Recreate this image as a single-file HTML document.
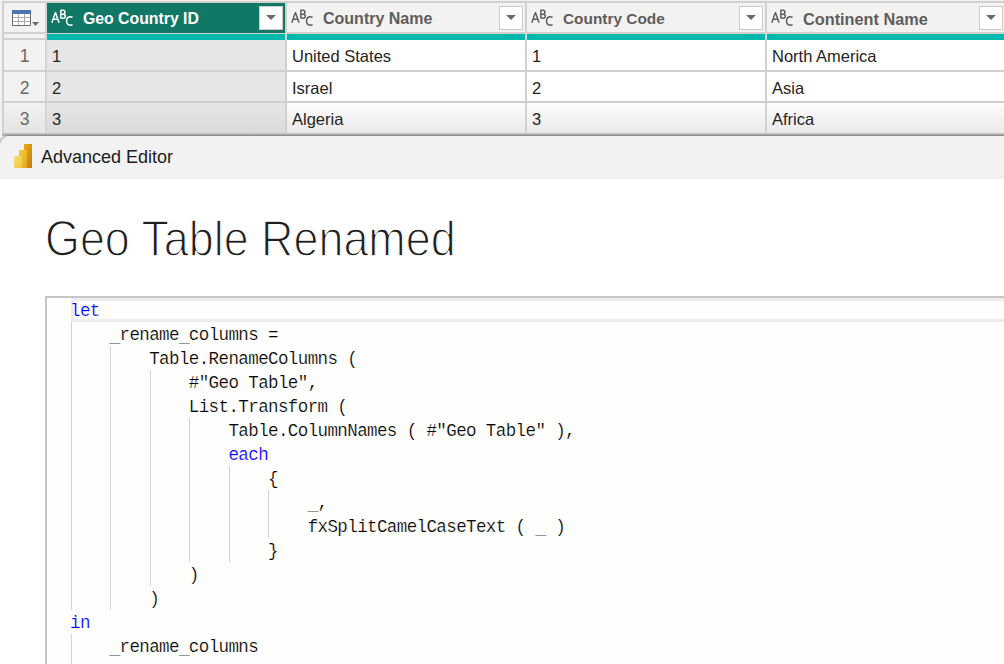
<!DOCTYPE html>
<html><head><meta charset="utf-8">
<style>
*{margin:0;padding:0;box-sizing:border-box}
html,body{width:1004px;height:664px;overflow:hidden;background:#fff;font-family:"Liberation Sans",sans-serif}
.a{position:absolute}
#grid{position:absolute;left:0;top:0;width:1004px;height:150px;background:#f3f2f1}
.hl{position:absolute;background:#d2d0ce}
.hdr{position:absolute;top:3px;height:29px;background:#f3f2f1}
.hdr.sel{background:#127866}
.htxt{position:absolute;top:7px;font-weight:bold;font-size:16px;color:#605e5c;white-space:nowrap}
.sel .htxt{color:#fff}
.dd{position:absolute;top:3px;width:24px;height:24px;background:#fff;border:1px solid #cfc9c7}
.dd:after{content:"";position:absolute;left:6px;top:8px;border-left:5px solid transparent;border-right:5px solid transparent;border-top:5px solid #6b6b6b}
.abc{position:absolute;top:0;width:30px;height:29px;overflow:visible}
.cell{position:absolute;height:30px;background:#fff}
.ctxt{position:absolute;top:7px;font-size:16.5px;color:#252423;white-space:nowrap}
.rn{position:absolute;left:4px;width:41px;height:30px;background:#f3f2f1;text-align:center}
.rn span{position:absolute;left:0;right:0;top:6px;font-size:17.5px;color:#6a6866}
#panel{position:absolute;left:0;top:136px;width:1010px;height:540px;background:#fff;border-top-left-radius:10px;box-shadow:-1px -1px 2px rgba(0,0,0,0.3)}
#tbar{position:absolute;left:0;top:0;width:1010px;height:43px;background:#f2f2f2;border-top-left-radius:10px}
#title{position:absolute;left:45px;top:210px;font-size:50px;color:#1f1f1f;white-space:nowrap;transform-origin:0 0;transform:scaleX(0.897);-webkit-text-stroke:1.4px #fff}
#ed{position:absolute;left:45px;top:296px;width:970px;height:380px;background:#fefefc;border:2px solid #c6c6c6;border-right:none;border-bottom:none}
.ln{position:absolute;left:70px;height:24px;font-family:"Liberation Mono",monospace;font-size:17.5px;letter-spacing:-0.6px;-webkit-text-stroke:0.2px #fefefc;line-height:24px;color:#000;white-space:pre}
.kw{color:#0000ff}
.u{position:relative;top:1.5px}
.g{position:absolute;width:1px;background:#d4d4d4}
</style></head><body>
<div id="grid">
  <!-- outer lines -->
  <div class="hl" style="left:2px;top:1px;width:1002px;height:2px"></div>
  <div class="hl" style="left:2px;top:1px;width:2px;height:135px"></div>
  <!-- header row bottom -->
  <div class="hl" style="left:2px;top:32px;width:1002px;height:2px"></div>
  <!-- column dividers -->
  <div class="hl" style="left:45px;top:1px;width:2px;height:135px;background:#d8d2d0"></div>
  <div class="hl" style="left:285px;top:1px;width:2px;height:135px"></div>
  <div class="hl" style="left:525px;top:1px;width:2px;height:135px"></div>
  <div class="hl" style="left:765px;top:1px;width:2px;height:135px"></div>

  
  <!-- header cells -->
  <div class="hdr" style="left:4px;width:41px"></div>
  <svg class="a" style="left:0;top:0" width="44" height="32" viewBox="0 0 44 32">
    <rect x="12" y="10" width="19" height="16" fill="#fff"/>
    <rect x="12" y="10" width="19" height="4" fill="#4878b4"/>
    <path d="M18.5 14V25M24.5 14V25M13 17.5H30M13 21.5H30" stroke="#ababab" stroke-width="1" fill="none"/>
    <path d="M12.5 14V25.5H30.5V14" stroke="#6b6b6b" stroke-width="1" fill="none"/>
    <path d="M32 22H39L35.5 26Z" fill="#6b6b6b"/>
  </svg>
  <div class="hdr sel" style="left:47px;width:238px;top:3px;height:30px">
    <svg class="abc" style="left:4px" viewBox="0 0 30 29"><g fill="none" stroke="#fff" stroke-width="1.5" stroke-linejoin="round"><path d="M0.8 19.8L4.45 9.6L8.1 19.8M2.3 16.3H6.6"/><path d="M9.85 15.15V7.25H12C13.3 7.25 13.9 7.9 13.9 9.2C13.9 10.5 13.2 11.3 12 11.3H9.85M12 11.3C13.5 11.3 14.3 12 14.3 13.2C14.3 14.5 13.5 15.15 12 15.15H9.85"/><path d="M21.6 14.3C21 13.95 20.3 13.85 19.4 13.85C17 13.85 15.55 15.6 15.55 18.1C15.55 20.6 17 22.15 19.3 22.15C20.2 22.15 21 21.95 21.6 21.6"/></g></svg>
    <div class="htxt" style="left:36px;font-size:15.8px">Geo Country ID</div>
    <div class="dd" style="left:212px"></div>
  </div>
  <div class="hdr" style="left:287px;width:238px">
    <svg class="abc" style="left:4px" viewBox="0 0 30 29"><g fill="none" stroke="#605e5c" stroke-width="1.5" stroke-linejoin="round"><path d="M0.8 19.8L4.45 9.6L8.1 19.8M2.3 16.3H6.6"/><path d="M9.85 15.15V7.25H12C13.3 7.25 13.9 7.9 13.9 9.2C13.9 10.5 13.2 11.3 12 11.3H9.85M12 11.3C13.5 11.3 14.3 12 14.3 13.2C14.3 14.5 13.5 15.15 12 15.15H9.85"/><path d="M21.6 14.3C21 13.95 20.3 13.85 19.4 13.85C17 13.85 15.55 15.6 15.55 18.1C15.55 20.6 17 22.15 19.3 22.15C20.2 22.15 21 21.95 21.6 21.6"/></g></svg>
    <div class="htxt" style="left:36px">Country Name</div>
    <div class="dd" style="left:212px"></div>
  </div>
  <div class="hdr" style="left:527px;width:238px">
    <svg class="abc" style="left:4px" viewBox="0 0 30 29"><g fill="none" stroke="#605e5c" stroke-width="1.5" stroke-linejoin="round"><path d="M0.8 19.8L4.45 9.6L8.1 19.8M2.3 16.3H6.6"/><path d="M9.85 15.15V7.25H12C13.3 7.25 13.9 7.9 13.9 9.2C13.9 10.5 13.2 11.3 12 11.3H9.85M12 11.3C13.5 11.3 14.3 12 14.3 13.2C14.3 14.5 13.5 15.15 12 15.15H9.85"/><path d="M21.6 14.3C21 13.95 20.3 13.85 19.4 13.85C17 13.85 15.55 15.6 15.55 18.1C15.55 20.6 17 22.15 19.3 22.15C20.2 22.15 21 21.95 21.6 21.6"/></g></svg>
    <div class="htxt" style="left:36px;font-size:15.4px">Country Code</div>
    <div class="dd" style="left:212px"></div>
  </div>
  <div class="hdr" style="left:767px;width:237px">
    <svg class="abc" style="left:4px" viewBox="0 0 30 29"><g fill="none" stroke="#605e5c" stroke-width="1.5" stroke-linejoin="round"><path d="M0.8 19.8L4.45 9.6L8.1 19.8M2.3 16.3H6.6"/><path d="M9.85 15.15V7.25H12C13.3 7.25 13.9 7.9 13.9 9.2C13.9 10.5 13.2 11.3 12 11.3H9.85M12 11.3C13.5 11.3 14.3 12 14.3 13.2C14.3 14.5 13.5 15.15 12 15.15H9.85"/><path d="M21.6 14.3C21 13.95 20.3 13.85 19.4 13.85C17 13.85 15.55 15.6 15.55 18.1C15.55 20.6 17 22.15 19.3 22.15C20.2 22.15 21 21.95 21.6 21.6"/></g></svg>
    <div class="htxt" style="left:36px;font-size:16.3px">Continent Name</div>
    <div class="dd" style="left:212px"></div>
  </div>

  <!-- teal quality bar -->
  <div class="a" style="left:47px;top:34px;width:238px;height:6px;background:#01b8aa"></div>
  <div class="a" style="left:287px;top:34px;width:238px;height:6px;background:#01b8aa"></div>
  <div class="a" style="left:527px;top:34px;width:238px;height:6px;background:#01b8aa"></div>
  <div class="a" style="left:767px;top:34px;width:237px;height:6px;background:#01b8aa"></div>
  <div class="hl" style="left:4px;top:38px;width:41px;height:2px"></div>

  <!-- rows -->
  <div class="rn" style="top:40px"><span>1</span></div>
  <div class="rn" style="top:72px"><span>2</span></div>
  <div class="rn" style="top:103px;background:linear-gradient(#f3f2f1,#e4e4e4)"><span>3</span></div>
  <div class="hl" style="left:2px;top:70px;width:1002px;height:2px"></div>
  <div class="hl" style="left:2px;top:101px;width:1002px;height:2px"></div>
  <div class="hl" style="left:2px;top:133px;width:1002px;height:3px;background:linear-gradient(#c8c8c8,#b0b0b0)"></div>

  <div class="cell" style="left:47px;top:40px;width:238px;background:#e6e6e6"><div class="ctxt" style="left:5px">1</div></div>
  <div class="cell" style="left:287px;top:40px;width:238px"><div class="ctxt" style="left:5px">United States</div></div>
  <div class="cell" style="left:527px;top:40px;width:238px"><div class="ctxt" style="left:5px">1</div></div>
  <div class="cell" style="left:767px;top:40px;width:237px"><div class="ctxt" style="left:5px">North America</div></div>

  <div class="cell" style="left:47px;top:72px;width:238px;height:29px;background:#e6e6e6"><div class="ctxt" style="left:5px;top:7px">2</div></div>
  <div class="cell" style="left:287px;top:72px;width:238px;height:29px"><div class="ctxt" style="left:5px;top:7px">Israel</div></div>
  <div class="cell" style="left:527px;top:72px;width:238px;height:29px"><div class="ctxt" style="left:5px;top:7px">2</div></div>
  <div class="cell" style="left:767px;top:72px;width:237px;height:29px"><div class="ctxt" style="left:5px;top:7px">Asia</div></div>

  <div class="cell" style="left:47px;top:103px;width:238px;background:linear-gradient(#e6e6e6,#dadada)"><div class="ctxt" style="left:5px;top:7px">3</div></div>
  <div class="cell" style="left:287px;top:103px;width:238px;background:linear-gradient(#fdfdfd,#e9e9e9)"><div class="ctxt" style="left:5px;top:7px">Algeria</div></div>
  <div class="cell" style="left:527px;top:103px;width:238px;background:linear-gradient(#fdfdfd,#e9e9e9)"><div class="ctxt" style="left:5px;top:7px">3</div></div>
  <div class="cell" style="left:767px;top:103px;width:237px;background:linear-gradient(#fdfdfd,#e9e9e9)"><div class="ctxt" style="left:5px;top:7px">Africa</div></div>
</div>

<div id="panel">
  <div id="tbar">
    <svg class="a" style="left:14px;top:8px" width="19" height="25" viewBox="0 0 19 25">
      <defs>
        <linearGradient id="b3" x1="0" y1="0" x2="1" y2="1"><stop offset="0" stop-color="#e8ab1c"/><stop offset="1" stop-color="#c77a08"/></linearGradient>
        <linearGradient id="b2" x1="0" y1="0" x2="1" y2="1"><stop offset="0" stop-color="#f6cd3e"/><stop offset="1" stop-color="#e2a91a"/></linearGradient>
        <linearGradient id="b1" x1="0" y1="0" x2="1" y2="1"><stop offset="0" stop-color="#f9e07a"/><stop offset="1" stop-color="#f0c23a"/></linearGradient>
      </defs>
      <rect x="10" y="0" width="8" height="24" fill="url(#b3)"/>
      <rect x="5" y="6" width="8" height="18" fill="url(#b2)"/>
      <rect x="0" y="12" width="8" height="12" fill="url(#b1)"/>
    </svg>
    <div class="a" style="left:41px;top:11px;font-size:18px;color:#1b1b1b;white-space:nowrap">Advanced Editor</div>
  </div>
</div>

<div id="title">Geo Table Renamed</div>

<div id="ed"></div>
<!-- current line highlight -->
<div class="a" style="left:71px;top:298px;width:940px;height:24px;border:3px solid #ededed;border-right:none;background:#fefefc"></div>

<!-- indent guides -->
<div class="g" style="left:71px;top:322px;height:288px"></div>
<div class="g" style="left:71px;top:634px;height:30px"></div>
<div class="g" style="left:110px;top:346px;height:264px"></div>
<div class="g" style="left:150px;top:370px;height:216px"></div>
<div class="g" style="left:189px;top:418px;height:144px"></div>
<div class="g" style="left:229px;top:466px;height:96px"></div>
<div class="g" style="left:268px;top:490px;height:48px"></div>

<div class="ln" style="top:299px"><span class="kw">let</span></div>
<div class="ln" style="top:323px">    <span class="u">_</span>rename<span class="u">_</span>columns =</div>
<div class="ln" style="top:347px">        Table.RenameColumns (</div>
<div class="ln" style="top:371px">            #"Geo Table",</div>
<div class="ln" style="top:395px">            List.Transform (</div>
<div class="ln" style="top:419px">                Table.ColumnNames ( #"Geo Table" ),</div>
<div class="ln" style="top:443px">                <span class="kw">each</span></div>
<div class="ln" style="top:467px">                    {</div>
<div class="ln" style="top:491px">                        <span class="u">_</span>,</div>
<div class="ln" style="top:515px">                        fxSplitCamelCaseText ( <span class="u">_</span> )</div>
<div class="ln" style="top:539px">                    }</div>
<div class="ln" style="top:563px">            )</div>
<div class="ln" style="top:587px">        )</div>
<div class="ln" style="top:611px"><span class="kw">in</span></div>
<div class="ln" style="top:635px">    <span class="u">_</span>rename<span class="u">_</span>columns</div>
</body></html>
